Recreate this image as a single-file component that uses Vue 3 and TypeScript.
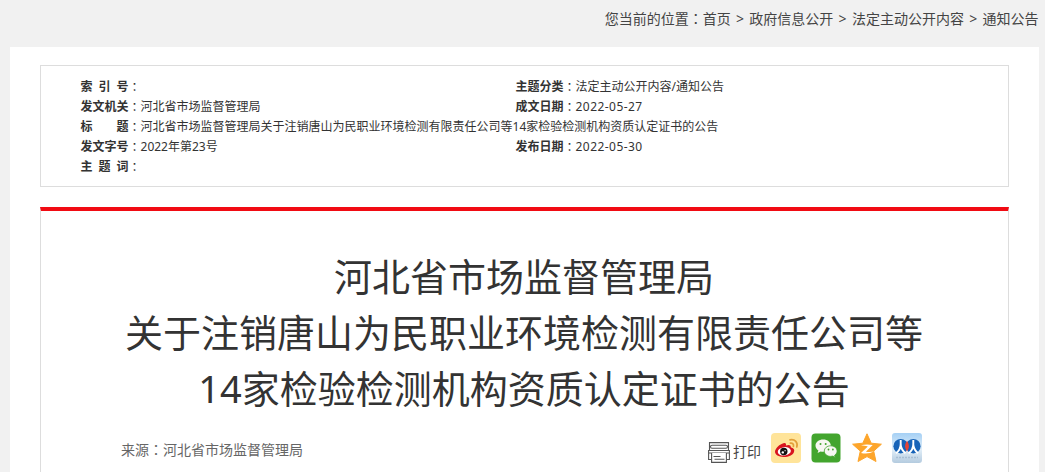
<template>
  <div class="page">
    <div class="location">
      <span>您当前的位置<i class="colon">：</i></span>
      <template v-for="(item, index) in crumbs" :key="item">
        <span v-if="index > 0" class="arrow">&gt;</span>
        <a>{{ item }}</a>
      </template>
    </div>

    <div class="content">
      <div class="info">
        <div v-for="(row, index) in infoRows" :key="index" class="info-row">
          <div v-for="cell in row" :key="cell.label" class="info-cell">
            <b class="label"><span v-for="word in cell.label.split(' ')" :key="word">{{ word }}</span></b>
            <i class="colon">：</i>
            <span :class="{ date: cell.isDate }">{{ cell.value }}</span>
          </div>
        </div>
      </div>

      <div class="article">
        <h1>
          <span v-for="line in titleLines" :key="line">{{ line }}</span>
        </h1>
        <div class="meta">
          <div class="source">来源<i class="colon">：</i>河北省市场监督管理局</div>
          <div class="tools">
            <a class="print">
              <svg width="22" height="21" viewBox="0 0 22 21" fill="none" stroke="#555" stroke-width="1.1">
                <path d="M1.500 8V.6h19V8" />
                <rect x="2.500" y="3.200" width="17" height="3" rx="1.500" />
                <path d="M3.500 17.500H.6V8.500h20.800v9h-2.900M.6 11h20.800" />
                <path d="M3.600 11v9.400h14.800V11" fill="#fff" />
                <path d="M5.500 14.500h7M6.500 17.300h10" />
              </svg>
              <span>打印</span>
            </a>
            <!-- 微博 -->
            <svg class="share" viewBox="0 0 30 30">
              <rect width="30" height="30" rx="4" fill="#ffe49a" />
              <path d="M12.500 10.200c2.100-.5 3 .6 2.400 2.300 2.900-1.100 5.300-.5 4.800 1.800 2.900.7 4.200 2.300 3.300 4.600-1.200 3.300-5.700 5.200-10.400 5.100C7.700 23.900 4 21.900 4 18.800c0-3.500 5-7.900 8.500-8.600z" fill="#d8141f" />
              <ellipse cx="13.300" cy="18.300" rx="6.600" ry="4.200" transform="rotate(-8 13.300 18.300)" fill="#fff" />
              <circle cx="12.800" cy="18.500" r="3.700" fill="#111" />
              <circle cx="11.800" cy="19.400" r="1.200" fill="#fff" />
              <circle cx="14.100" cy="17.700" r=".6" fill="#fff" />
              <path d="M19 6.800c5-1 8.200 2.800 6.800 7.200M19.300 10.200c2.300-.4 3.700 1.200 3.100 3.200" fill="none" stroke="#e2a03a" stroke-width="1.700" stroke-linecap="round" />
            </svg>
            <!-- 微信 -->
            <svg class="share" viewBox="0 0 30 30">
              <rect x=".5" y=".5" width="29" height="29" rx="4" fill="#43a52e" />
              <path d="M12.200 6.500c-4.400 0-7.700 2.700-7.700 6.100 0 2.100 1.100 3.800 2.900 4.900l-.8 2.600 3-1.600c.9.200 1.700.3 2.600.3 4.300 0 7.600-2.800 7.600-6.200s-3.300-6.100-7.600-6.100z" fill="#f7f7f2" />
              <path d="M19.700 12.800c-3.600 0-6.400 2.300-6.400 5.300s2.800 5.300 6.400 5.300c.8 0 1.500-.1 2.200-.3l2.400 1.300-.7-2.100c1.500-1 2.500-2.500 2.500-4.200 0-3-2.800-5.300-6.400-5.300z" fill="#f7f7f2" stroke="#43a52e" stroke-width=".8" />
              <g fill="#43a52e">
                <circle cx="9.500" cy="11" r="1" />
                <circle cx="14.700" cy="11" r="1" />
                <circle cx="17.500" cy="16.500" r=".9" />
                <circle cx="21.900" cy="16.500" r=".9" />
              </g>
            </svg>
            <!-- QQ空间 -->
            <svg class="share qzone" viewBox="0 0 30 30">
              <path d="M15 .8l4.200 9.400 10.200 1-7.700 6.900 2.300 10.400L15 23.600l-9 4.900 2.300-10.400L.6 11.200l10.200-1z" fill="#fda52b" stroke="#fda52b" stroke-width="1" stroke-linejoin="round" />
              <path d="M9 12.200c4-.9 7.800-.9 11.700-.1l-6.800 6.600c2.800.5 5.200.5 7.900-.1-3.600 2-8.400 2.500-12.800 1.300l6.800-6.500c-2.300-.6-4.300-.8-6.800-1.200z" fill="#fff" />
            </svg>
            <!-- 人人网 -->
            <svg class="share" viewBox="0 0 30 30">
              <defs>
                <linearGradient id="renren-bg" x1="0" y1="0" x2="0" y2="1">
                  <stop offset="0" stop-color="#a5d0f5" />
                  <stop offset=".55" stop-color="#e1eef8" />
                  <stop offset="1" stop-color="#b4cbdf" />
                </linearGradient>
              </defs>
              <rect width="30" height="30" rx="3" fill="url(#renren-bg)" />
              <ellipse cx="8.700" cy="13.200" rx="7.300" ry="7.200" fill="#1763b8" />
              <ellipse cx="21.300" cy="13.200" rx="7.300" ry="7.200" fill="#1763b8" />
              <path d="M15 7.800c2.600 3.600 2.600 7.200 0 10.800-2.600-3.600-2.600-7.200 0-10.800z" fill="#e64436" />
              <path d="M8.700 7v4c0 4-1.500 6.800-4.700 9.300M8.700 12c.5 3.500 2 6 4.700 8.300M21.300 7v4c0 4-1.500 6.800-4.700 9.300M21.300 12c.5 3.500 2 6 4.700 8.300" fill="none" stroke="#fff" stroke-width="1.900" />
              <path d="M4 24.500h22" stroke="#a9bfd4" stroke-width="1.300" stroke-dasharray="2 1" />
            </svg>
          </div>
        </div>
      </div>
    </div>
  </div>
</template>

<script setup lang="ts">
interface InfoCell {
  label: string;
  value: string;
  isDate?: boolean;
}

// 面包屑导航
const crumbs: string[] = ['首页', '政府信息公开', '法定主动公开内容', '通知公告'];

// 公文信息，标签中的空格用于两端对齐
const infoRows: InfoCell[][] = [
  [
    { label: '索 引 号', value: '' },
    { label: '主题分类', value: '法定主动公开内容/通知公告' },
  ],
  [
    { label: '发文机关', value: '河北省市场监督管理局' },
    { label: '成文日期', value: '2022-05-27', isDate: true },
  ],
  [{ label: '标 题', value: '河北省市场监督管理局关于注销唐山为民职业环境检测有限责任公司等14家检验检测机构资质认定证书的公告' }],
  [
    { label: '发文字号', value: '2022年第23号' },
    { label: '发布日期', value: '2022-05-30', isDate: true },
  ],
  [{ label: '主 题 词', value: '' }],
];

const titleLines: string[] = [
  '河北省市场监督管理局',
  '关于注销唐山为民职业环境检测有限责任公司等',
  '14家检验检测机构资质认定证书的公告',
];
</script>

<style>
body {
  background-color: #f1f1f1;
  overflow: hidden;
}
</style>

<style scoped>
.page {
  height: 472px;
  overflow: hidden;
  font-family: 'Noto Sans', 'Noto Sans CJK SC', sans-serif;
  color: #333;
  background-color: #f1f1f1;
}

.colon {
  font-family: 'Noto Sans CJK TC', sans-serif;
  font-style: normal;
  font-weight: normal;
  line-height: 1;
}

.info .colon {
  line-height: 20px;
}

.location {
  display: flex;
  justify-content: flex-end;
  height: 47px;
  padding-right: 6.5px;
  line-height: 38px;
  font-size: 14px;
  color: #444;
}

.arrow {
  width: 18.6px;
  text-align: center;
  font-size: 14px;
}

.content {
  margin: 0 6px 0 10px;
  padding: 18px 30px 0;
  background-color: #fff;
}

.info {
  box-sizing: border-box;
  height: 122px;
  padding: 11px 39.5px;
  border: 1px solid #ddd;
  font-size: 12px;
}

.info-row {
  display: grid;
  grid-template-columns: 435px 1fr;
  height: 20px;
  line-height: 20px;
}

.info-cell {
  display: flex;
  white-space: nowrap;
}

.label {
  display: flex;
  flex: none;
  justify-content: space-between;
  width: 48px;
}

.date {
  letter-spacing: 0.45px;
}

.article {
  height: 300px;
  margin-top: 20px;
  border: 1px solid #ddd;
  border-top: 4px solid #f10b13;
}

h1 {
  margin: 0;
  padding: 37px 1px 0 0;
  font-size: 38px;
  font-weight: normal;
  line-height: 56px;
  text-align: center;
  white-space: nowrap;
}

h1 span {
  display: block;
}

.meta {
  display: flex;
  justify-content: space-between;
  padding: 17px 86px 0 80px;
}

.source {
  font-size: 14px;
  line-height: 34px;
  color: #666;
}

.tools {
  display: flex;
  gap: 10px;
}

.print {
  display: flex;
  gap: 3px;
  align-items: center;
  height: 39px;
  line-height: 18px;
  font-size: 14px;
  color: #444;
}

.print span {
  padding-bottom: 2px;
}

.share {
  width: 30px;
  height: 30px;
}

.qzone {
  margin-left: 1px;
}
</style>
